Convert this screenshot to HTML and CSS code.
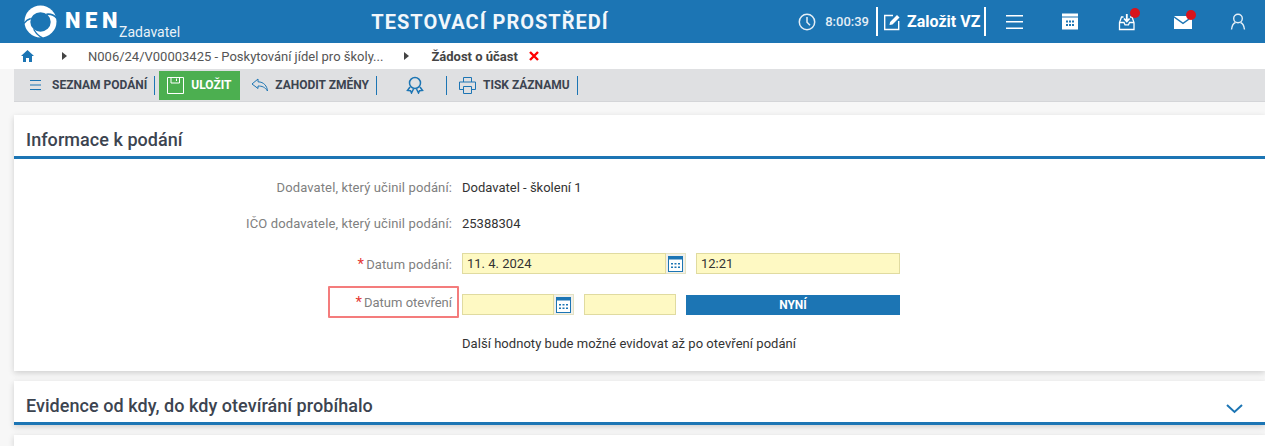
FILE: index.html
```html
<!DOCTYPE html>
<html lang="cs">
<head>
  <meta charset="UTF-8">
  <title>NEN Zadavatel</title>
  <link rel="stylesheet" href="styles.css">
</head>
<body>

  <header class="topbar">
    <div class="brand">
      <svg class="brand-logo" width="33" height="33" viewBox="0 0 34 34">
        <circle cx="17" cy="17" r="16.500" fill="#fff"/>
        <ellipse cx="17" cy="17.500" rx="10.500" ry="10" fill="#1c75b4"/>
        <g fill="none" stroke="#1c75b4" stroke-width="1.600">
          <path d="M23 9.500C27 9 31 10 34 14"/>
          <path d="M7 14C4 15 2 16 0 19"/>
          <path d="M10 25C12 29 15 32 19 34"/>
        </g>
      </svg>
      <span class="brand-name">NEN</span>
      <span class="brand-role">Zadavatel</span>
    </div>
    <div class="env-title">TESTOVACÍ PROSTŘEDÍ</div>
    <div class="top-tools">
      <svg class="clock" width="18" height="18" viewBox="0 0 18 18" fill="none" stroke="#e4eef6" stroke-width="1.500"><circle cx="9" cy="9" r="7.700"/><path d="M9 4v5.200l3 3"/></svg>
      <span class="time">8:00:39</span>
      <div class="new-vz">
        <svg width="18" height="18" viewBox="0 0 18 18" fill="none" stroke="#fff" stroke-width="1.400"><path d="M10 2.500H1.700v14h14V8"/><path d="M6.500 12l.6-3L14 2l2.500 2.500-7 7z" fill="#fff" stroke="none"/></svg>
        <span>Založit VZ</span>
      </div>
      <div class="top-icons">
        <svg width="18" height="16" viewBox="0 0 18 16" fill="#fff"><rect y="1" width="17" height="1.500"/><rect y="7" width="17" height="1.500"/><rect y="13.500" width="17" height="1.500"/></svg>
        <svg width="17" height="17" viewBox="0 0 17 17"><rect width="16" height="16" y=".5" fill="#fff"/><rect y="3.500" width="16" height="1" fill="#1c75b4"/><g fill="#1c75b4"><rect x="4" y="7.500" width="2" height="2"/><rect x="7" y="7.500" width="2" height="2"/><rect x="10" y="7.500" width="2" height="2"/><rect x="4" y="11" width="2" height="2"/><rect x="7" y="11" width="2" height="2"/><rect x="10" y="11" width="2" height="2"/></g></svg>
        <span class="icon-dot">
          <svg width="18" height="18" viewBox="0 0 18 18" fill="none" stroke="#fff" stroke-width="1.300"><path d="M5.500 4H3.500L1.500 9.500V16.500H16V9.500L14 4H12"/><path d="M1.500 9.500H6l1 2.300h3.500l1-2.300h4.500"/><path d="M8.800 1v7M6 5.500l2.800 3 2.800-3" stroke-width="1.800"/></svg>
          <i class="dot"></i>
        </span>
        <span class="icon-dot">
          <svg width="18" height="14" viewBox="0 0 18 14"><path d="M0 1h18L9 7.500z" fill="#fff"/><path d="M0 2.800L9 9.200l9-6.400V14H0z" fill="#fff"/></svg>
          <i class="dot"></i>
        </span>
        <svg width="16" height="17" viewBox="0 0 16 17" fill="none" stroke="#e4eef6" stroke-width="1.400"><circle cx="8" cy="5.500" r="4.300"/><path d="M1.500 16.500c.5-4 2.500-6.500 4-7M14.500 16.500c-.5-4-2.500-6.500-4-7"/></svg>
      </div>
    </div>
  </header>

  <nav class="crumbs">
    <svg class="crumb-home" width="13" height="12" viewBox="0 0 13 12" fill="#1c75b4"><path d="M6.500 0L13 6h-2v6H8V8H5v4H2V6H0z"/></svg>
    <i class="crumb-arrow first"></i>
    <span class="crumb-link">N006/24/V00003425 - Poskytování jídel pro školy...</span>
    <i class="crumb-arrow"></i>
    <span class="crumb-current">Žádost o účast</span>
    <svg class="crumb-close" width="10" height="10" viewBox="0 0 10 10" stroke="#f00" stroke-width="2.400"><path d="M1 1l8 8M9 1l-8 8"/></svg>
  </nav>

  <div class="toolbar">
    <button class="tool" type="button">
      <svg width="12" height="11" viewBox="0 0 12 11" fill="#1c75b4"><rect y="0" width="11" height="1"/><rect y="4.500" width="11" height="1"/><rect y="9" width="11" height="1"/></svg>
      SEZNAM PODÁNÍ
    </button>
    <i class="sep"></i>
    <button class="tool save" type="button">
      <svg width="17" height="17" viewBox="0 0 17 17" fill="none" stroke="#fff" stroke-width="1"><path d="M.5.500h16v16H.5zM4 .500v5.500h8.500V.500M9.500 1.500v2.500"/></svg>
      ULOŽIT
    </button>
    <button class="tool discard" type="button">
      <svg width="18" height="14" viewBox="0 0 18 14" fill="none" stroke="#1c75b4" stroke-width="1"><path d="M7 1L1 6l6 4.500V8c4 0 7 1 9.500 5C16 8 13 4 7 3.800z"/></svg>
      ZAHODIT ZMĚNY
    </button>
    <i class="sep"></i>
    <button class="tool medal" type="button">
      <svg width="18" height="18" viewBox="0 0 18 18" fill="none" stroke="#1c75b4" stroke-width="1.500"><circle cx="9" cy="7" r="5.500"/><path d="M4 11l-2.500 3.500 3 .3 1 2.200 2-4M14 11l2.500 3.500-3 .3-1 2.200-2-4"/></svg>
    </button>
    <i class="sep"></i>
    <button class="tool print" type="button">
      <svg width="17" height="17" viewBox="0 0 17 17" fill="none" stroke="#1c75b4" stroke-width="1"><path d="M4.500 5V.5h8V5M4.500 12.500H.5V5h16v7.500h-4M4.500 9.500h8v7h-8z"/></svg>
      TISK ZÁZNAMU
    </button>
    <i class="sep"></i>
  </div>

  <main class="content">
    <section class="card">
      <h2 class="card-title">Informace k podání</h2>
      <div class="form">
        <div class="row row-text">
          <label class="lbl">Dodavatel, který učinil podání:</label>
          <span class="val">Dodavatel - školení 1</span>
        </div>
        <div class="row row-text">
          <label class="lbl">IČO dodavatele, který učinil podání:</label>
          <span class="val">25388304</span>
        </div>
        <div class="row row-input">
          <label class="lbl"><b class="req">*</b>Datum podání:</label>
          <div class="fields">
            <div class="date date-wide">
              <input class="inp" type="text" value="11. 4. 2024">
              <span class="cal">
                <svg width="15" height="16" viewBox="0 0 15 16"><rect x=".5" y=".5" width="14" height="15" fill="#fff" stroke="#1c75b4"/><rect width="15" height="3.500" fill="#1c75b4"/><g fill="#1c75b4"><rect x="3" y="7" width="2" height="1.500"/><rect x="6.500" y="7" width="2" height="1.500"/><rect x="10" y="7" width="2" height="1.500"/><rect x="3" y="10.500" width="2" height="1.500"/><rect x="6.500" y="10.500" width="2" height="1.500"/><rect x="10" y="10.500" width="2" height="1.500"/></g></svg>
              </span>
            </div>
            <input class="inp time-wide" type="text" value="12:21">
          </div>
        </div>
        <div class="row row-input row-open">
          <label class="lbl lbl-error"><b class="req">*</b>Datum otevření</label>
          <div class="fields">
            <div class="date date-narrow">
              <input class="inp" type="text">
              <span class="cal">
                <svg width="15" height="16" viewBox="0 0 15 16"><rect x=".5" y=".5" width="14" height="15" fill="#fff" stroke="#1c75b4"/><rect width="15" height="3.500" fill="#1c75b4"/><g fill="#1c75b4"><rect x="3" y="7" width="2" height="1.500"/><rect x="6.500" y="7" width="2" height="1.500"/><rect x="10" y="7" width="2" height="1.500"/><rect x="3" y="10.500" width="2" height="1.500"/><rect x="6.500" y="10.500" width="2" height="1.500"/><rect x="10" y="10.500" width="2" height="1.500"/></g></svg>
              </span>
            </div>
            <input class="inp time-narrow" type="text">
            <button class="now" type="button">NYNÍ</button>
          </div>
        </div>
        <p class="note">Další hodnoty bude možné evidovat až po otevření podání</p>
      </div>
    </section>

    <section class="card card-closed">
      <h2 class="card-title">Evidence od kdy, do kdy otevírání probíhalo
        <svg class="chevron" width="17" height="10" viewBox="0 0 17 10" fill="none" stroke="#1c75b4" stroke-width="2"><path d="M1 1l7.500 7L16 1"/></svg>
      </h2>
    </section>

    <section class="card card-next"></section>
  </main>

</body>
</html>
```

FILE: styles.css
```css
* {
  box-sizing: border-box;
}
html, body {
  height: 446px;
  overflow: hidden;
}
body {
  margin: 0;
  font-family: Roboto, "Liberation Sans", sans-serif;
  font-size: 13px;
  color: #333;
  background-color: #f7f7f7;
}
.topbar {
  height: 43px;
  background-color: #1c75b4;
  color: #fff;
  display: flex;
  align-items: center;
}
.brand {
  width: 340px;
  padding-left: 24px;
  display: flex;
  align-items: center;
}
.brand-logo {
  flex: none;
}
.brand-name {
  margin-left: 8px;
  font-size: 22px;
  font-weight: 900;
  letter-spacing: 4.6px;
  margin-top: -2px;
}
.brand-role {
  font-size: 14px;
  margin-left: -3px;
  margin-top: 20px;
  color: #eaf2f8;
}
.env-title {
  width: 300px;
  text-align: center;
  font-size: 20px;
  font-weight: 700;
  letter-spacing: 1px;
  color: #f2f7fb;
}
.top-tools {
  margin-left: auto;
  display: flex;
  align-items: center;
  height: 100%;
}
.time {
  margin-left: 9px;
  font-weight: 500;
  color: #e4eef6;
}
.new-vz {
  margin-left: 7px;
  height: 29px;
  width: 110px;
  padding-left: 5px;
  border-left: 2px solid #fff;
  border-right: 2px solid #fff;
  display: flex;
  align-items: center;
  gap: 6px;
  font-size: 16px;
  font-weight: 700;
}
.top-icons {
  width: 279px;
  padding: 0 19px 0 20px;
  display: flex;
  align-items: center;
  justify-content: space-between;
}
.icon-dot {
  position: relative;
  display: block;
  line-height: 0;
}
.dot {
  position: absolute;
  top: -5px;
  right: -4px;
  width: 10px;
  height: 10px;
  border-radius: 50%;
  background-color: #d8141c;
}
.crumbs {
  height: 26px;
  padding-left: 21px;
  display: flex;
  align-items: center;
  background-color: #fff;
}
.crumb-arrow {
  width: 0;
  height: 0;
  border-left: 5px solid #444;
  border-top: 4px solid transparent;
  border-bottom: 4px solid transparent;
  margin: 0 22px 0 21px;
}
.crumb-arrow.first {
  margin: 0 21px 0 28px;
}
.crumb-link {
  color: #555;
}
.crumb-current {
  font-weight: 700;
  color: #444;
}
.crumb-close {
  margin-left: 11px;
}
.toolbar {
  height: 33px;
  margin-left: 14px;
  padding-left: 16px;
  display: flex;
  align-items: center;
  background-color: #dfe0e2;
  border-bottom: 1px solid #d4d5d8;
}
.tool {
  border: none;
  background: none;
  padding: 0;
  height: 29px;
  display: flex;
  align-items: center;
  font-family: inherit;
  font-size: 12px;
  font-weight: 700;
  color: #3c4450;
}
.tool svg {
  margin-right: 10px;
}
.sep {
  width: 1px;
  height: 19px;
  background-color: #1c75b4;
}
.tool:first-child {
  margin-right: 7px;
}
.save {
  width: 81px;
  margin-left: 4px;
  padding-left: 8px;
  background-color: #4caf50;
  color: #fff;
}
.save svg {
  margin-right: 7px;
}
.discard {
  margin-left: 11px;
  margin-right: 7px;
}
.discard svg {
  margin-right: 6px;
}
.medal {
  margin-left: 29px;
  margin-right: 22px;
}
.medal svg {
  margin-right: 0;
}
.print {
  margin-left: 12px;
  margin-right: 7px;
}
.print svg {
  margin-right: 7px;
}
.content {
  padding: 13px 0 0 14px;
}
.card {
  background-color: #fff;
  box-shadow: 0 2px 6px rgba(0, 0, 0, 0.16);
  margin-bottom: 10px;
}
.card-title {
  margin: 0;
  height: 44px;
  padding: 14px 12px 0;
  border-bottom: 3px solid #1c75b4;
  font-size: 18px;
  line-height: 22px;
  font-weight: 500;
  letter-spacing: 0.05px;
  color: #3c4450;
  display: flex;
  justify-content: space-between;
}
.chevron {
  margin-top: 9px;
  margin-right: 10px;
}
.form {
  height: 212px;
  padding-top: 10px;
}
.row {
  display: grid;
  grid-template-columns: 438px 1fr;
  column-gap: 10px;
  align-items: center;
}
.row-text {
  height: 36px;
}
.row-input {
  height: 41px;
}
.row-text + .row-input {
  margin-top: 2px;
}
.lbl {
  text-align: right;
  color: #808080;
  letter-spacing: 0.12px;
}
.req {
  color: #e53935;
  font-weight: 400;
  font-size: 15px;
  margin-right: 2px;
}
.val {
  color: #333;
}
.fields {
  display: flex;
  align-items: center;
}
.date {
  display: flex;
  height: 21px;
}
.date-wide {
  width: 224px;
}
.date-narrow {
  width: 112px;
}
.inp {
  height: 21px;
  padding: 0 4px;
  border: 1px solid #e0dba0;
  background-color: #fef9c3;
  font-family: inherit;
  font-size: 13px;
  color: #333;
  border-radius: 0;
}
.date .inp {
  flex: 1;
  min-width: 0;
}
.cal {
  width: 20px;
  height: 21px;
  background-color: #f0f0ea;
  border: 1px solid #e4e2c4;
  border-left: none;
  display: flex;
  align-items: center;
  justify-content: center;
}
.time-wide {
  width: 204px;
  margin-left: 10px;
}
.time-narrow {
  width: 92px;
  margin-left: 10px;
}
.now {
  width: 214px;
  height: 20px;
  margin-left: 10px;
  border: none;
  background-color: #1c75b4;
  color: #fff;
  font-family: inherit;
  font-size: 12px;
  font-weight: 700;
}
.lbl-error {
  justify-self: end;
  align-self: start;
  width: 131px;
  height: 32px;
  margin-top: 2px;
  margin-right: -7px;
  padding-right: 5px;
  line-height: 28px;
  letter-spacing: 0;
  border: 2px solid #f47c7c;
  border-radius: 1px;
}
.note {
  margin: 11px 0 0 448px;
  letter-spacing: 0.04px;
  color: #333;
}
.card-next {
  height: 11px;
  margin-bottom: 0;
}
```
